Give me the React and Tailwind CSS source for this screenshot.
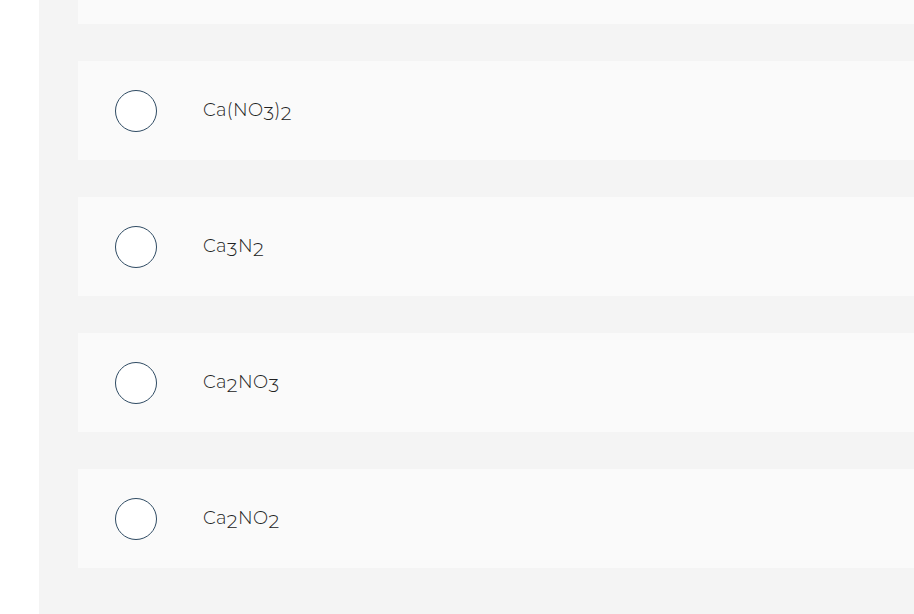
import React from "react";

const options = [
  { id: "a", parts: ["Ca(NO", "3", ")", "2"] },
  { id: "b", parts: ["Ca", "3", "N", "2"] },
  { id: "c", parts: ["Ca", "2", "NO", "3"] },
  { id: "d", parts: ["Ca", "2", "NO", "2"] },
];

function Formula({ parts }) {
  return (
    <span>
      {parts.map((p, i) =>
        i % 2 === 1 ? (
          <span key={i} className="relative top-[4px] text-[19px]">
            {p}
          </span>
        ) : (
          <span key={i}>{p}</span>
        )
      )}
    </span>
  );
}

export default function App() {
  return (
    <div
      className="flex h-[614px] w-[914px] overflow-hidden bg-white"
      style={{ fontFamily: "Montserrat, Lato, 'Open Sans', sans-serif" }}
    >
      <div className="w-[39px] shrink-0 bg-white" />
      <div className="flex-1 bg-[#f4f4f4] pl-[39px]">
        <div className="-mt-[75px] flex flex-col gap-[37px]">
          <div className="h-[99px] bg-[#fafafa]" />
          {options.map((o) => (
            <label
              key={o.id}
              className="flex h-[99px] cursor-pointer items-center bg-[#fafafa] pl-[37px]"
            >
              <span className="h-[42px] w-[42px] shrink-0 rounded-full border-[1.5px] border-[#2f4b63] bg-white" />
              <span className="ml-[46px] text-[18px] font-light tracking-[0.4px] text-[#222]">
                <Formula parts={o.parts} />
              </span>
            </label>
          ))}
        </div>
      </div>
    </div>
  );
}
